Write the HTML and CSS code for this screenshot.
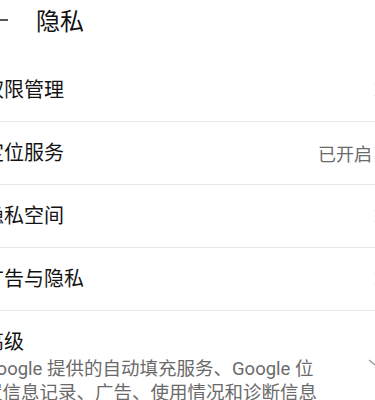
FILE: index.html
```html
<!DOCTYPE html>
<html lang="zh-CN">
<head>
<meta charset="utf-8">
<link rel="stylesheet" href="styles.css">
</head>
<body>
<div class="page">
  <header class="header">
    <svg class="back" width="24" height="24" viewBox="0 0 24 24"><path d="M24 12H2M9 4L1 12l8 8" fill="none" stroke="#222" stroke-width="1.6"/></svg>
    <h1 class="title">隐私</h1>
  </header>
  <div class="list">
    <div class="row">
      <span class="label">权限管理</span>
      <svg class="chev" width="8" height="14" viewBox="0 0 8 14"><path d="M1 1l6 6-6 6" fill="none" stroke="#bbb" stroke-width="1.5"/></svg>
    </div>
    <div class="row">
      <span class="label">定位服务</span>
      <span class="value">已开启</span>
      <svg class="chev" width="8" height="14" viewBox="0 0 8 14"><path d="M1 1l6 6-6 6" fill="none" stroke="#bbb" stroke-width="1.5"/></svg>
    </div>
    <div class="row">
      <span class="label">隐私空间</span>
      <svg class="chev" width="8" height="14" viewBox="0 0 8 14"><path d="M1 1l6 6-6 6" fill="none" stroke="#bbb" stroke-width="1.5"/></svg>
    </div>
    <div class="row">
      <span class="label">广告与隐私</span>
      <svg class="chev" width="8" height="14" viewBox="0 0 8 14"><path d="M1 1l6 6-6 6" fill="none" stroke="#bbb" stroke-width="1.5"/></svg>
    </div>
    <div class="row row-adv">
      <div class="text">
        <div class="label">高级</div>
        <div class="sub">Google 提供的自动填充服务、Google 位置信息记录、广告、使用情况和诊断信息</div>
      </div>
      <svg class="down" width="18" height="10" viewBox="0 0 18 10"><path d="M1 1l8 6.5L17 1" fill="none" stroke="#9a9a9a" stroke-width="1.5"/></svg>
    </div>
  </div>
</div>
</body>
</html>
```
FILE: styles.css
```css
html, body {
  margin: 0;
  padding: 0;
  overflow: hidden;
  background: #fff;
}
body {
  font-family: Roboto, "Noto Sans CJK SC", sans-serif;
  color: #111;
}
.page {
  margin-left: -16px;
  width: 415px;
}
.header {
  display: flex;
  align-items: center;
  height: 43px;
  margin-bottom: 16px;
}
.back {
  flex: none;
  margin-top: -4px;
}
.title {
  margin: 0 0 0 28px;
  font-size: 24px;
  font-weight: 400;
  line-height: 30px;
  color: #111;
}
.row {
  display: flex;
  align-items: center;
  height: 62px;
  border-bottom: 1px solid #e9e9e9;
  padding-right: 17px;
}
.label {
  flex: 1;
  font-size: 20px;
  line-height: 26px;
  color: #141414;
  white-space: nowrap;
}
.value {
  font-size: 18px;
  color: #6a6a6a;
  margin-right: 2px;
}
.chev {
  flex: none;
}
.row-adv {
  height: auto;
  align-items: flex-start;
  border-bottom: none;
  padding-top: 18px;
  padding-right: 13px;
}
.text {
  flex: 1;
  margin-right: 46px;
}
.sub {
  margin-top: 2px;
  font-size: 18.5px;
  line-height: 24px;
  color: #6a6a6a;
}
.down {
  flex: none;
  margin-top: 30px;
}
```
